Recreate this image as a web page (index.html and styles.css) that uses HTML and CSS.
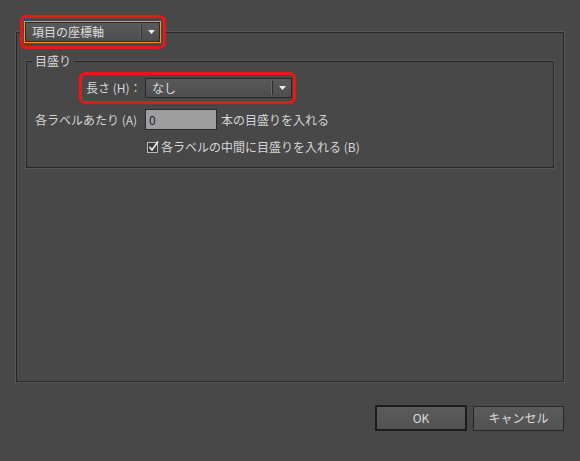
FILE: index.html
```html
<!DOCTYPE html>
<html>

<head>
    <meta charset="utf-8">
    <title>項目の座標軸</title>
    <link rel="stylesheet" href="styles.css">
</head>

<body>
    <div class="dialog">
        <div class="axis-group">
            <div class="highlight axis-head">
                <div class="select select-orange">
                    <span class="select-text">項目の座標軸</span>
                    <span class="select-sep"></span>
                    <span class="select-arrow"><svg width="7" height="4" viewBox="0 0 7 4"><path d="M0 0H7L3.5 4Z" fill="#ececec"/></svg></span>
                </div>
            </div>

            <div class="scale-group">
                <div class="legend">目盛り</div>

                <div class="highlight length-row">
                    <span class="length-label">長さ (H)：</span>
                    <div class="select select-length">
                        <span class="select-text">なし</span>
                        <span class="select-sep"></span>
                        <span class="select-arrow"><svg width="7" height="4" viewBox="0 0 7 4"><path d="M0 0H7L3.5 4Z" fill="#ececec"/></svg></span>
                    </div>
                </div>

                <div class="count-row">
                    <span class="count-label">各ラベルあたり (A)</span>
                    <input class="count-input" type="text" value="0">
                    <span class="count-unit">本の目盛りを入れる</span>
                </div>

                <div class="check-row">
                    <svg class="check" width="13" height="13" viewBox="0 0 13 13">
                        <rect x="0.5" y="2.5" width="10" height="10" fill="#3b3b3b" stroke="#b8b8b8"/>
                        <path d="M2.5 7L5 10L11 1.5" fill="none" stroke="#ededed" stroke-width="1.6"/>
                    </svg>
                    <span>各ラベルの中間に目盛りを入れる (B)</span>
                </div>
            </div>
        </div>

        <div class="buttons">
            <button class="button button-default">OK</button>
            <button class="button">キャンセル</button>
        </div>
    </div>
</body>

</html>
```

FILE: styles.css
```css
body {
    margin: 0;
    background-color: #484848;
    color: #d6d6d6;
    font-family: "Noto Sans CJK JP", "Liberation Sans", sans-serif;
    font-size: 12px;
    line-height: 16px;
}

.dialog {
    width: 580px;
    height: 461px;
    overflow: hidden;
}

.axis-group {
    margin: 32px 16px 0;
    height: 350px;
    box-sizing: border-box;
    border: 1px solid #262626;
    box-shadow: 0 0 0 1px #565656;
}

.highlight {
    display: flex;
    align-items: center;
    width: fit-content;
    border: 3px solid #e41919;
    border-radius: 7px;
    background-color: #484848;
    box-shadow: 0 0 1px #e41919;
}

.axis-head {
    margin: -18px 0 0 3px;
    padding: 3px 2px 3px 1px;
}

.select {
    display: flex;
    align-items: center;
    box-sizing: border-box;
    border: 1px solid #262626;
    background: linear-gradient(#5a5a5a, #4d4d4d);
}

.select-orange {
    width: 137px;
    height: 22px;
    border-color: #f7931e;
    box-shadow: inset 0 0 0 1px #2a2a2a;
}

.select-orange .select-text {
    padding-left: 7px;
}

.select-length {
    width: 147px;
    height: 20px;
}

.select-text {
    flex: 1;
    padding-left: 6px;
    color: #dcdcdc;
}

.select-sep {
    width: 1px;
    height: 14px;
    background-color: #2c2c2c;
    box-shadow: -1px 0 0 #6a6a6a;
}

.select-arrow {
    width: 18px;
    display: flex;
    justify-content: center;
}

.select-arrow svg {
    display: block;
}

.scale-group {
    margin: 12px 9px 0;
    height: 107px;
    box-sizing: border-box;
    border: 1px solid #262626;
    box-shadow: 0 0 0 1px #565656;
}

.legend {
    width: fit-content;
    margin: -9px 0 0 5px;
    padding: 0 3px;
    background-color: #484848;
}

.length-row {
    margin: 3px 0 0 52px;
    padding: 3px 1px 3px 4px;
}

.length-label {
    width: 59px;
}

.count-row {
    display: flex;
    align-items: center;
    margin: 5px 0 0 8px;
}

.count-label {
    width: 110px;
}

.count-input {
    width: 72px;
    height: 21px;
    box-sizing: border-box;
    margin: 0;
    padding: 0 3px;
    border: 1px solid #2a2a2a;
    background-color: #9e9e9e;
    color: #0f1d38;
    font: inherit;
    outline: none;
}

.count-unit {
    margin-left: 4px;
}

.check-row {
    display: flex;
    align-items: center;
    margin: 9px 0 0 120px;
}

.check {
    display: block;
    margin: -2px 1px 0 0;
}

.buttons {
    display: flex;
    justify-content: flex-end;
    align-items: center;
    gap: 6px;
    margin-top: 23px;
    padding-right: 16px;
}

.button {
    width: 91px;
    height: 25px;
    margin: 0;
    padding: 0;
    box-sizing: border-box;
    border: 1px solid #262626;
    background: linear-gradient(#5b5b5b, #525252);
    color: #dcdcdc;
    font: inherit;
}

.button-default {
    width: 92px;
    height: 26px;
    border: 2px solid #1c1c1c;
}
```
